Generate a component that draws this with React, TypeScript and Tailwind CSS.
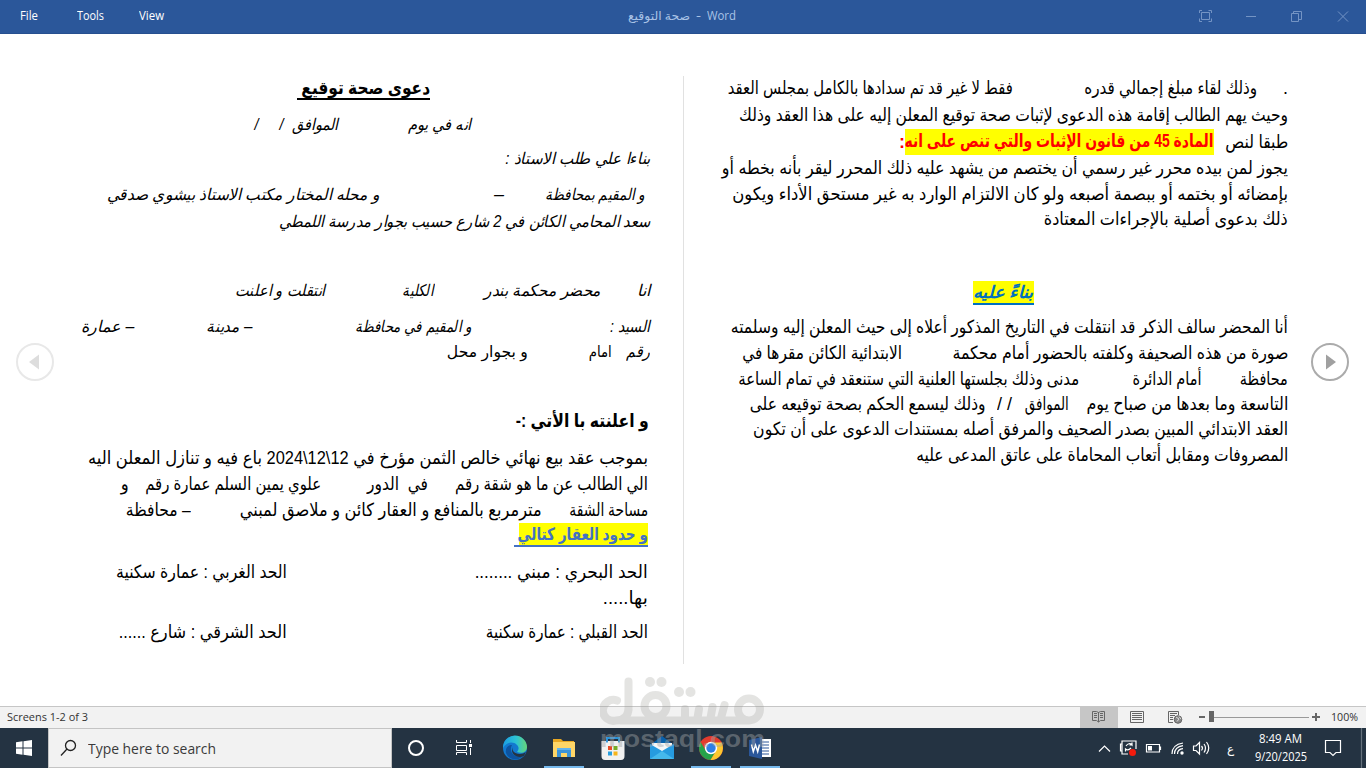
import { useLayoutEffect, useRef } from "react";
import type { ReactNode } from "react";

function Fit({ width, children, origin = "left", className = "" }: { width: number; children: ReactNode; origin?: "left" | "right"; className?: string }) {
  const ref = useRef<HTMLSpanElement>(null);
  useLayoutEffect(() => {
    const el = ref.current;
    if (el) el.style.transform = `scaleX(${width / el.getBoundingClientRect().width})`;
  }, [width]);
  return (
    <span className={`block shrink-0 whitespace-pre ${className}`} style={{ width }}>
      <span ref={ref} className={origin === "left" ? "inline-block origin-left" : "inline-block origin-right"}>
        {children}
      </span>
    </span>
  );
}

type Segment = { text: string; right: number; left: number; className?: string };
type Line = { y: number; className?: string; segments: Segment[] };
const s = (text: string, left: number, right: number, className = ""): Segment => ({ text, left, right, className });

const LINE = 26;
const ARABIC = "font-['Liberation_Sans','DejaVu_Sans',sans-serif]";

const leftPage: Line[] = [
  { y: 88, className: "text-[18px] font-bold", segments: [s("دعوى صحة توقيع ", 298, 431, "h-[24px] border-b-2 border-black")] },
  { y: 125, className: "text-[16px] italic", segments: [s("انه في يوم", 409, 472), s("الموافق", 293, 339), s("/", 280, 284), s("/", 255, 259)] },
  { y: 159, className: "text-[16px] italic", segments: [s("بناءا علي طلب الاستاذ :", 506, 651)] },
  { y: 195, className: "text-[16px] italic", segments: [s("و المقيم بمحافظة", 546, 646), s("–", 495, 505), s("و محله المختار مكتب الاستاذ بيشوي صدقي", 108, 381)] },
  { y: 222, className: "text-[16px] italic", segments: [s("سعد المحامي الكائن في 2 شارع حسيب بجوار مدرسة اللمطي", 280, 651)] },
  { y: 291, className: "text-[16px] italic", segments: [s("انا", 638, 651), s("محضر محكمة بندر", 485, 602), s("الكلية", 403, 434), s("انتقلت و اعلنت", 236, 326)] },
  { y: 327, className: "text-[16px] italic", segments: [s("السيد :", 611, 651), s("و المقيم في محافظة", 356, 472), s("– مدينة", 207, 253), s("– عمارة", 82, 135)] },
  { y: 352, className: "text-[16px]", segments: [s("رقم", 627, 651, "italic"), s("امام", 590, 613), s("و بجوار محل", 448, 529)] },
  { y: 421, className: "text-[18px] font-bold", segments: [s("و اعلنته با الأتي :-", 517, 650)] },
  { y: 458, className: "text-[18px]", segments: [s("بموجب عقد بيع نهائي خالص الثمن مؤرخ في 12\\12\\2024 باع فيه و تنازل المعلن اليه", 89, 649)] },
  { y: 484, className: "text-[18px]", segments: [s("الي الطالب عن ما هو شقة رقم", 456, 649), s("في  الدور", 368, 429), s("علوي يمين السلم عمارة رقم", 146, 322), s("و", 122, 130)] },
  { y: 510, className: "text-[18px]", segments: [s("مساحة الشقة", 570, 649), s("مترمربع بالمنافع و العقار كائن و ملاصق لمبني", 241, 543), s("– محافظة", 127, 192)] },
  { y: 535, className: "text-[17px] font-bold text-[#4472c4]", segments: [s("و حدود العقار كتالي ", 515, 649, "h-[24px] border-b-2 border-[#4472c4] bg-linear-to-l from-[#ffff00] from-[129px] to-transparent to-[129px]")] },
  { y: 572, className: "text-[18px]", segments: [s("الحد البحري : مبني ........", 476, 649), s("الحد الغربي : عمارة سكنية", 117, 288)] },
  { y: 598, className: "text-[18px]", segments: [s("بها.....", 604, 649)] },
  { y: 632, className: "text-[18px]", segments: [s("الحد القبلي : عمارة سكنية", 487, 649), s("الحد الشرقي : شارع ......", 120, 288)] },
];

const rightPage: Line[] = [
  { y: 88, className: "text-[18px]", segments: [s(".", 1283, 1288), s("وذلك لقاء مبلغ إجمالي قدره", 1084, 1257), s("فقط لا غير قد تم سدادها بالكامل بمجلس العقد", 728, 1013)] },
  { y: 115, className: "text-[18px]", segments: [s("وحيث يهم الطالب إقامة هذه الدعوى لإثبات صحة توقيع المعلن إليه على هذا العقد وذلك", 739, 1288)] },
  { y: 142, className: "text-[18px]", segments: [s("طبقا لنص", 1225, 1288), s("المادة 45 من قانون الإثبات والتي تنص على انه", 905, 1214, "h-[26px] bg-[#ffff00] font-bold text-[#ff0000]"), s(":", 899, 905, "font-bold text-[#ff0000]")] },
  { y: 168, className: "text-[18px]", segments: [s("يجوز لمن بيده محرر غير رسمي أن يختصم من يشهد عليه ذلك المحرر ليقر بأنه بخطه أو", 722, 1288)] },
  { y: 194, className: "text-[18px]", segments: [s("بإمضائه أو بختمه أو ببصمة أصبعه ولو كان الالتزام الوارد به غير مستحق الأداء ويكون", 732, 1288)] },
  { y: 219, className: "text-[18px]", segments: [s("ذلك بدعوى أصلية بالإجراءات المعتادة", 1044, 1288)] },
  { y: 293, className: "text-[17px] font-bold italic text-[#0070c0]", segments: [s("بناءً عليه", 973, 1034, "h-[24px] border-b-2 border-[#0070c0] bg-[#ffff00]")] },
  { y: 327, className: "text-[18px]", segments: [s("أنا المحضر سالف الذكر قد انتقلت في التاريخ المذكور أعلاه إلى حيث المعلن إليه وسلمته", 731, 1288)] },
  { y: 353, className: "text-[18px]", segments: [s("صورة من هذه الصحيفة وكلفته بالحضور أمام محكمة", 952, 1288), s("الابتدائية الكائن مقرها في", 742, 902)] },
  { y: 379, className: "text-[18px]", segments: [s("محافظة", 1240, 1288), s("أمام الدائرة", 1133, 1202), s("مدنى وذلك بجلستها العلنية التي ستنعقد في تمام الساعة", 738, 1079)] },
  { y: 404, className: "text-[18px]", segments: [s("التاسعة وما بعدها من صباح يوم", 1086, 1288), s("الموافق", 1025, 1069), s("/ /", 997, 1012), s("وذلك ليسمع الحكم بصحة توقيعه على", 750, 986)] },
  { y: 429, className: "text-[18px]", segments: [s("العقد الابتدائي المبين بصدر الصحيف والمرفق أصله بمستندات الدعوى على أن تكون", 753, 1288)] },
  { y: 455, className: "text-[18px]", segments: [s("المصروفات ومقابل أتعاب المحاماة على عاتق المدعى عليه", 916, 1288)] },
];

function Page({ lines, edge }: { lines: Line[]; edge: number }) {
  return (
    <div dir="rtl" className={`flex flex-col text-black ${ARABIC}`}>
      {lines.map((line, i) => (
        <div
          key={line.y}
          className={`flex h-[26px] shrink-0 items-center leading-[24px] ${line.className ?? ""}`}
          style={{ marginTop: i === 0 ? line.y - 34 - LINE / 2 : line.y - lines[i - 1].y - LINE }}
        >
          {line.segments.map((seg, j) => (
            <div key={seg.left} style={{ marginRight: (j === 0 ? edge : line.segments[j - 1].left) - seg.right }}>
              <Fit width={seg.right - seg.left} origin="right" className={seg.className}>
                {seg.text}
              </Fit>
            </div>
          ))}
        </div>
      ))}
    </div>
  );
}

const UI = "font-['Open_Sans','DejaVu_Sans',sans-serif]";

function TitleBar() {
  return (
    <header className="flex h-[34px] shrink-0 items-center border-b border-[#264f8f] bg-[#2b579a] pb-[2px] text-[12px] text-white">
      <Fit width={18} className="ml-[20px]">File</Fit>
      <Fit width={27} className="ml-[39px]">Tools</Fit>
      <Fit width={25} className="ml-[35px]">View</Fit>
      <div className="ml-[464px] flex items-center text-[#a9c3e6]">
        <Fit width={62}>صحة التوقيع</Fit>
        <Fit width={5} className="ml-[6px]">-</Fit>
        <Fit width={29} className="ml-[6px]">Word</Fit>
      </div>
      <svg className="ml-[463px] mt-[1px] h-[12px] w-[150px]" viewBox="0 0 150 12" fill="none" stroke="#7494c4">
        <path d="M.5 3V.5H3M9.500 .5H12.500V3M12.500 8.500V11.500H9.500M3 11.500H.5V8.500M2.500 2.500H10.500V9.500H2.500Z" />
        <path d="M47 6.500H57" />
        <path d="M92.500 3.500H99.500V11.500H92.500ZM94.500 3V1.500H102.500V9.500H100" />
        <path d="M139 1.500L149 11.500M149 1.500L139 11.500" />
      </svg>
    </header>
  );
}

function NavButton({ back = false }: { back?: boolean }) {
  return (
    <svg className={back ? "h-[40px] w-[40px]" : "h-[40px] w-[40px] rotate-180"} viewBox="0 0 40 40">
      <circle cx="20" cy="20" r="18" fill="none" stroke={back ? "#e8e8e8" : "#ababab"} strokeWidth="2" />
      <path d="M14 20L24 12.500V27.500Z" fill={back ? "#dddddd" : "#a0a0a0"} />
    </svg>
  );
}

function StatusBar() {
  return (
    <div className="flex h-[22px] shrink-0 items-center border-t border-[#c6c6c6] bg-[#f2f2f2] text-[11px] text-[#333]">
      <Fit width={81} className="ml-[7px]">Screens 1-2 of 3</Fit>
      <svg className="ml-[992px] h-[21px] w-[245px]" viewBox="0 0 245 21" fill="none" stroke="#666">
        <path d="M0 0H38V21H0Z" fill="#c6c6c6" stroke="none" />
        <path d="M12.500 4.500H16.500L18.500 5.500L20.500 4.500H24.500V13.500H20.500L18.500 15L16.500 13.500H12.500ZM18.500 5V15M14 6.500H17M14 8.500H17M14 10.500H17M20 6.500H23M20 8.500H23M20 10.500H23" />
        <path d="M50.500 4.500H63.500V15.500H50.500ZM52 6.500H62M52 8.500H62M52 10.500H62M52 12.500H62" />
        <path d="M93 15.500H88.500V4.500H98.500V8M90 6.500H97M90 8.500H95M90 10.500H93M90 12.500H93" />
        <circle cx="98" cy="12.500" r="3.800" fill="#888" />
        <path d="M96 10L99 12L97 14.500M99 9.500L101 12" stroke="#f2f2f2" strokeWidth=".8" />
        <path d="M119 10H125" strokeWidth="2" />
        <path d="M129 4H134V15H129Z" fill="#666" stroke="none" />
        <path d="M134 10.500H229" stroke="#999" />
        <path d="M232 10H240M236 6V14" strokeWidth="2" />
      </svg>
      <Fit width={27} className="ml-[6px]">100%</Fit>
    </div>
  );
}

function Slot({ active = false, children }: { active?: boolean; children: ReactNode }) {
  return (
    <div className="flex h-[40px] w-[49px] flex-col items-center">
      <svg className="h-[38px] w-[40px] shrink-0" viewBox="0 0 40 38">{children}</svg>
      {active && <div className="h-[2px] w-[40px] bg-[#76b9ed]" />}
    </div>
  );
}

function Taskbar() {
  return (
    <footer className="flex h-[40px] shrink-0 bg-[#243342]">
      <svg className="h-[40px] w-[48px]" viewBox="0 0 48 40" fill="#fff">
        <path d="M16 14.300L22.500 13.300V19.500H16ZM23.500 13.200L32 12V19.500H23.500ZM16 20.500H22.500V26.700L16 25.700ZM23.500 20.500H32V28L23.500 26.800Z" />
      </svg>
      <div className="flex h-[40px] w-[344px] items-center border border-[#c4c4c4] bg-[#f2f2f2]">
        <svg className="ml-[11px] h-[18px] w-[18px]" viewBox="0 0 18 18" fill="none" stroke="#222" strokeWidth="1.300">
          <circle cx="10.500" cy="6.500" r="5" />
          <path d="M7 10L1 16.500" />
        </svg>
        <Fit width={128} className="ml-[10px] text-[15px] text-[#3a3a3a]">Type here to search</Fit>
      </div>
      <svg className="h-[40px] w-[98px]" viewBox="0 0 98 40" fill="none" stroke="#fff">
        <circle cx="24" cy="20" r="7" strokeWidth="2" />
        <path d="M64.500 12V14.500H74.500V12M64.500 27V24.500H74.500V27M64.500 17.500H74.500V22.500H64.500ZM78.500 12V15M78.500 20V27" />
        <path d="M77 16H80V19H77Z" fill="#fff" stroke="none" />
      </svg>
      <Slot>
        <defs>
          <linearGradient id="edgeTop"><stop offset="0" stopColor="#1b9de2" /><stop offset=".55" stopColor="#2dc3d4" /><stop offset="1" stopColor="#66d477" /></linearGradient>
        </defs>
        <circle cx="20" cy="20" r="12" fill="#1379cf" />
        <path d="M8 20A12 12 0 0 1 32 19C32 24 27 26 22 24C23 22 25 20 22 17C18 13 11 14 8 20Z" fill="url(#edgeTop)" />
        <path d="M17 17C13 24 20 31 28 28C24 33 14 33 11 25C10 20 13 17 17 17Z" fill="#0d539f" />
        <path d="M18 18C16 22 19 26 25 26C27 26 29 25 31 24L29 28C22 31 14 26 18 18Z" fill="#243342" />
      </Slot>
      <Slot active>
        <path d="M9 11H17L19 13H30V28H9Z" fill="#e9a823" />
        <path d="M9 14H31V29H9Z" fill="#ffd667" />
        <path d="M13 21H27V29H23V25H17V29H13Z" fill="#3c94d9" />
        <path d="M13 20H27V22H13Z" fill="#63b4ed" />
      </Slot>
      <Slot>
        <path d="M14 15V10H26V15" fill="none" stroke="#2a93da" strokeWidth="2" />
        <path d="M8.500 13H31.500V28Q31.500 32 28 32H12Q8.500 32 8.500 28Z" fill="#f1f1f1" />
        <path d="M14 14.500V10H26V14.500" fill="none" stroke="#2a93da" strokeWidth="1.800" />
        <path d="M15 18H19V22H15Z" fill="#e74a26" /><path d="M20.500 18H24.500V22H20.500Z" fill="#75ad28" />
        <path d="M15 23.500H19V27.500H15Z" fill="#279fe0" /><path d="M20.500 23.500H24.500V27.500H20.500Z" fill="#f6b51b" />
      </Slot>
      <Slot>
        <path d="M8 17L20 8L32 17V31H8Z" fill="#0861ab" />
        <path d="M10 15H30V23H10Z" fill="#f5f7f8" />
        <path d="M8 16L20 23L32 16V31H8Z" fill="#269be0" />
        <path d="M8 31L20 23L32 31Z" fill="#45b8ec" />
      </Slot>
      <Slot active>
        <circle cx="20" cy="20" r="12" fill="#e33b2e" />
        <path d="M9.600 14A12 12 0 0 0 19.500 32L25 23L15 23Z" fill="#26a34a" />
        <path d="M20 14.500H30.600A12 12 0 0 1 19.500 32L25 23Z" fill="#fdc82f" />
        <circle cx="20" cy="20" r="6.200" fill="#fff" /><circle cx="20" cy="20" r="4.700" fill="#2f7fe6" />
      </Slot>
      <Slot active>
        <path d="M20 11H31V29H20Z" fill="#fff" />
        <path d="M22 14H29M22 17H29M22 20H29M22 23H29M22 26H29" stroke="#2b579a" />
        <path d="M9 12L22 9V31L9 28Z" fill="#2b579a" />
        <path d="M11.500 16.500L13.300 23.500L15.500 17L17.700 23.500L19.500 16.500" fill="none" stroke="#fff" strokeWidth="1.500" />
      </Slot>
      <svg className="ml-[312px] h-[40px] w-[116px]" viewBox="0 0 116 40" fill="none" stroke="#fff" strokeWidth="1.200">
        <path d="M3 23.500L8.500 18L14 23.500" />
        <path d="M37 13H26V26H32M26 16H24.500V23H26M37 13H40V21" />
        <path d="M30 18Q33 14 36 17V14.500M36 17H33.500M35 20Q32 23 29.500 21V23.500" />
        <circle cx="36.500" cy="24.500" r="3.500" fill="#f31b0d" stroke="none" />
        <path d="M50.500 16.500H63.500V24H50.500ZM64.500 18.500V22" />
        <path d="M52 18H56V22.500H52Z" fill="#fff" stroke="none" />
        <path d="M76 26C76 20 80 16 87 15M78.500 26C78.500 21.500 82 18.500 87 17.700M81.500 26C81.500 23 84 21 87 20.700" />
        <circle cx="86" cy="25" r="1.700" fill="#fff" stroke="none" />
        <path d="M97.500 18H100L103.500 14.500V26L100 22.500H97.500ZM105.500 18Q107.500 20 105.500 22.500M108 16Q111 20 108 24.500M110.500 14Q115 20 110.500 26" />
      </svg>
      <div className="ml-[15px] w-[14px] pt-[12px] text-[12px] leading-[18px] text-white">ع</div>
      <div className="ml-[14px] w-[56px] pt-[2px] text-[12px] leading-[18px] text-white">
        <Fit width={43} className="ml-[4px]">8:49 AM</Fit>
        <Fit width={52}>9/20/2025</Fit>
      </div>
      <svg className="ml-[13px] h-[40px] w-[39px]" viewBox="0 0 39 40" fill="none" stroke="#fff" strokeWidth="1.200">
        <path d="M1.500 12.500H16.500V24.500H12L9 27.500L6 24.500H1.500Z" />
        <path d="M37.500 0V40" stroke="#65717c" />
      </svg>
    </footer>
  );
}

function Watermark() {
  return (
    <div className="pointer-events-none absolute left-[600px] top-[676px] w-[166px]">
      <svg className="block h-[50px] w-[166px] opacity-[0.27]" viewBox="0 0 166 50" fill="none" stroke="#9d9d98" strokeWidth="8" strokeLinecap="round">
        <path d="M17 24.500A10.500 10.500 0 1 0 16 44.500C24 44.500 28.500 40 28.500 32V5.500M28.500 34Q26 44.500 20 44.500H149M160 33.500A11 11 0 1 1 138 33.500A11 11 0 1 1 160 33.500M66.500 30A11 11 0 1 1 44.500 30A11 11 0 1 1 66.500 30M85 33V42M99 33L97.500 42M112.500 31L110.500 42M124.500 29L121 42" />
        <g fill="#9d9d98" stroke="none">
          <circle cx="50" cy="6" r="5" /><circle cx="61.500" cy="6" r="5" /><circle cx="79" cy="16" r="5" /><circle cx="90.500" cy="16" r="5" />
        </g>
      </svg>
      <Fit width={165} className="font-['Liberation_Sans',sans-serif] text-[24px] font-bold leading-[26px] text-[#a0a4a6]/45">mostaql.com</Fit>
    </div>
  );
}

export default function App() {
  return (
    <div className={`relative flex h-[768px] w-[1366px] flex-col overflow-hidden bg-white ${UI}`}>
      <TitleBar />
      <main className="flex h-[672px] shrink-0">
        <div className="flex w-[60px] items-center justify-end pr-[5px] pb-[17px]"><NavButton back /></div>
        <div className="w-[591px]"><Page lines={leftPage} edge={652} /></div>
        <div className="ml-[32px] mt-[42px] h-[588px] w-px bg-[#e1e1e1]" />
        <div className="ml-[16px] w-[588px]"><Page lines={rightPage} edge={1288} /></div>
        <div className="flex w-[78px] items-center pb-[17px] pl-[22px]"><NavButton /></div>
      </main>
      <StatusBar />
      <Taskbar />
      <Watermark />
    </div>
  );
}
